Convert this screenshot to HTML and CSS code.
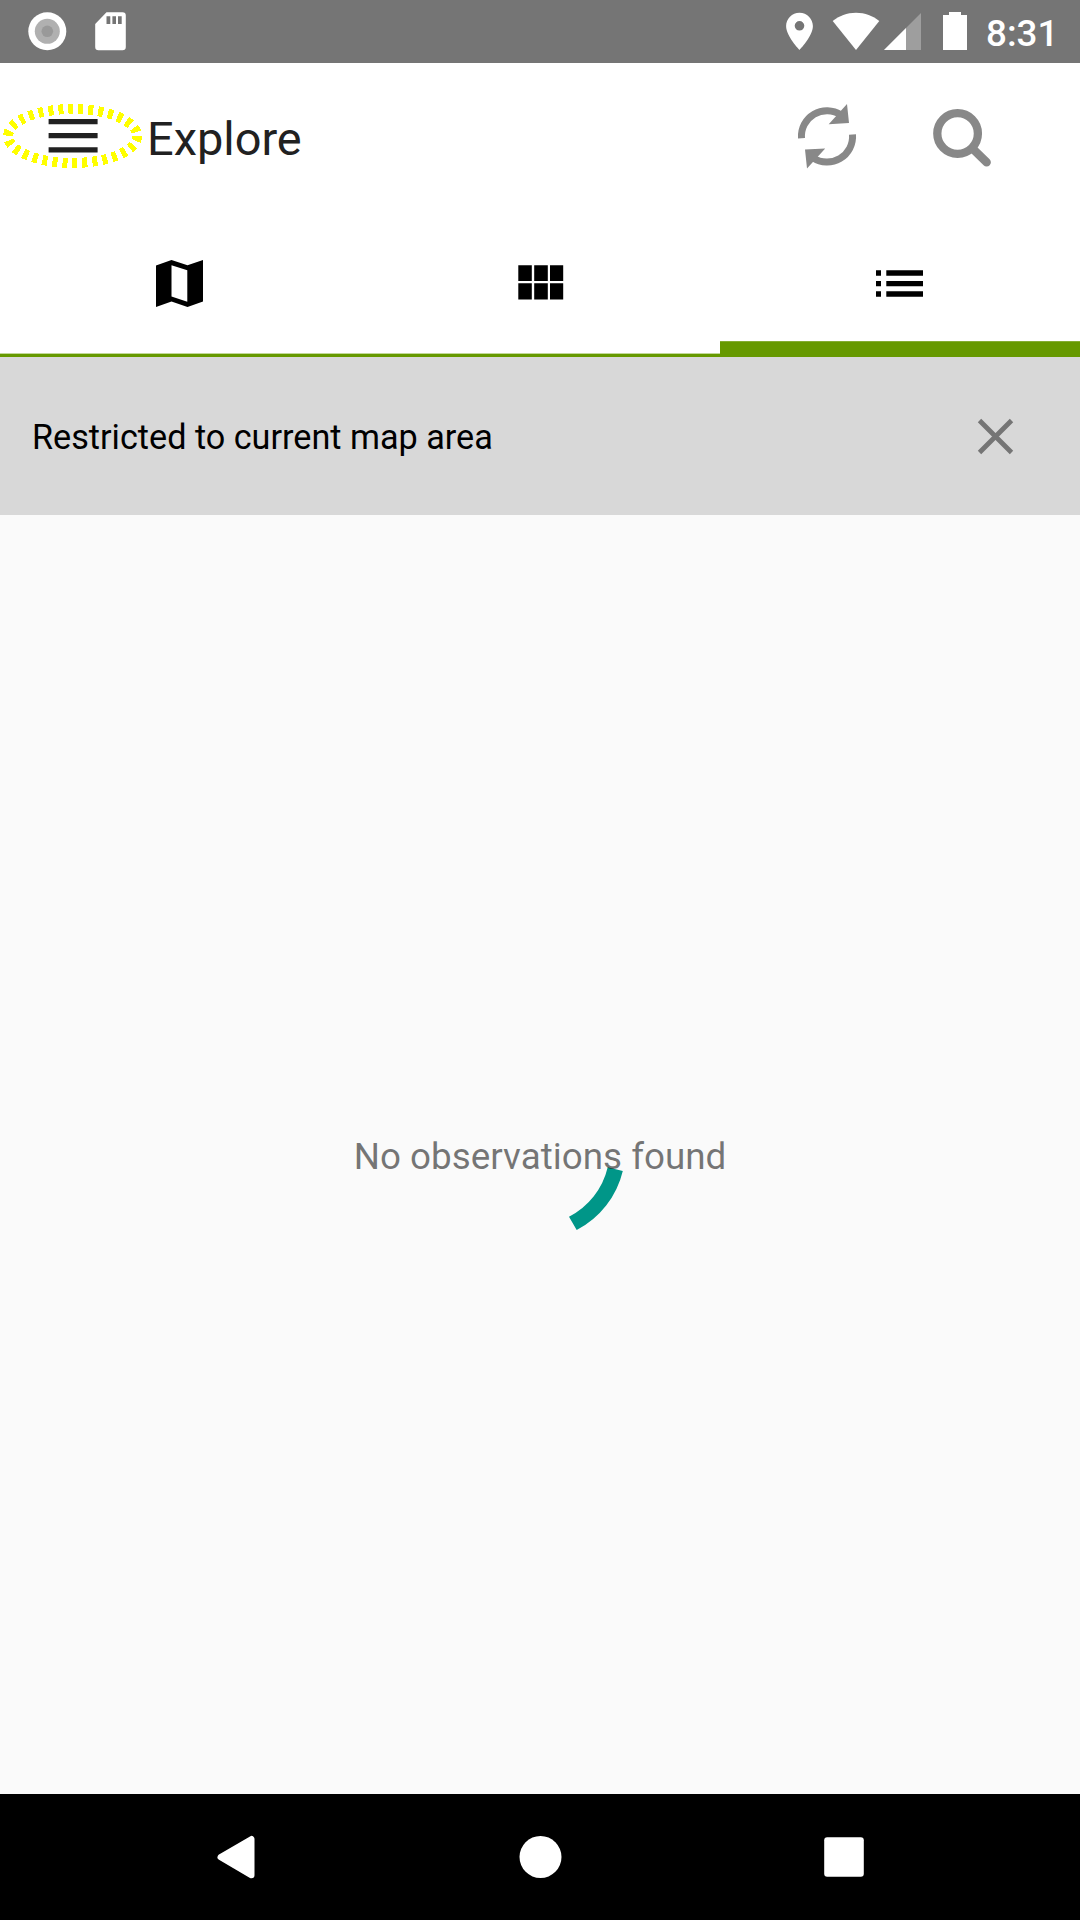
FILE: index.html
```html
<!DOCTYPE html>
<html lang="en">
<head>
<meta charset="utf-8">
<title>Explore</title>
<link rel="stylesheet" href="styles.css">
</head>
<body>
<div class="screen">
  <header class="status">
    <div class="status-left">
      <svg width="40" height="40" viewBox="0 0 40 40"><circle cx="19.3" cy="20.3" r="19" fill="#fff"/><circle cx="19.3" cy="20.3" r="12.5" fill="#b0b0b0"/><circle cx="19.3" cy="20.3" r="5.8" fill="#999"/></svg>
      <svg width="32" height="40" viewBox="0 0 32 40"><path fill="#fff" fill-rule="evenodd" d="M11.5 1.3H27.500a3.300 3.300 0 0 1 3.300 3.300V36a3.300 3.300 0 0 1-3.300 3.300H3.500A3.300 3.300 0 0 1 .2 36V13ZM11.500 5.300V13H15.300V5.300ZM17.400 5.300V13H21V5.300ZM23 5.300V13H26.700V5.300Z"/></svg>
    </div>
    <div class="status-right">
      <svg class="pin" width="28" height="40" viewBox="0 0 28 40"><path fill="#fff" fill-rule="evenodd" d="M13.500 1.700C6 1.700.1 7.700.1 15.100.1 25.200 13.500 39 13.500 39S26.900 25.200 26.900 15.100C26.900 7.700 21 1.700 13.500 1.700ZM13.500 10a4.800 4.800 0 1 1 0 9.600 4.800 4.800 0 0 1 0-9.600Z"/></svg>
      <svg class="wifi" width="48" height="40" viewBox="0 0 48 40"><path fill="#fff" d="M24 39 .7 10C7 5 15 1.800 24 1.800S41 5 47.300 10Z"/></svg>
      <svg class="signal" width="38" height="40" viewBox="0 0 38 40"><path fill="#9e9e9e" d="M0 39 37 2V39Z"/><path fill="#fff" d="M0 39 22 17V39Z"/></svg>
      <svg class="battery" width="24" height="40" viewBox="0 0 24 40"><path fill="#fff" d="M6 1H18V4H24V39H0V4H6Z"/></svg>
      <span class="clock">8:31</span>
    </div>
  </header>

  <div class="appbar">
    <button class="menu" aria-label="Menu">
      <svg width="146" height="73" viewBox="0 100 146 73">
        <ellipse cx="72.600" cy="136" rx="64.500" ry="27" fill="none" stroke="#ff0" stroke-width="10" stroke-dasharray="5 5" shape-rendering="crispEdges"/>
        <path fill="#212121" d="M48.600 119H97.600V124.200H48.600ZM48.600 133.100H97.600V138.300H48.600ZM48.600 147.300H97.600V152.500H48.600Z"/>
      </svg>
    </button>
    <h1 class="title">Explore</h1>
    <div class="actions">
      <svg width="60" height="67" viewBox="797 102.500 60 67">
        <g fill="none" stroke="#888" stroke-width="7"><path d="M801.500 137.700A25.500 25.500 0 0 1 841 114.500"/><path d="M852.500 134A25.500 25.500 0 0 1 813 157.300"/></g>
        <path fill="#888" d="M847 103.600 849 122.600 828.700 123.700ZM807 168 805 149 825.200 148Z"/>
      </svg>
      <svg width="60" height="67" viewBox="932 102.500 60 67">
        <circle cx="957.600" cy="133" r="20.300" fill="none" stroke="#888" stroke-width="8.300"/>
        <path d="M973 148.500 986.600 161.800" stroke="#888" stroke-width="8.600" stroke-linecap="round"/>
      </svg>
    </div>
  </div>

  <nav class="tabs">
    <div class="tab"><svg width="48" height="48" viewBox="156 260 48 48"><path fill-rule="evenodd" d="M156 265.500 171.500 260 187.500 265.300 203 260V301.500L187.500 307 171.500 301.500 156 307ZM171.500 265.300V296.500L187.300 301.800V270.200Z"/></svg></div>
    <div class="tab"><svg width="48" height="48" viewBox="516 260 48 48"><path d="M518.300 265.200H531.800V281H518.300ZM534.200 265.200H547.800V281H534.200ZM550 265.200H563.200V281H550ZM518.300 283.300H531.800V299.400H518.300ZM534.200 283.300H547.800V299.400H534.200ZM550 283.300H563.200V299.400H550Z"/></svg></div>
    <div class="tab active"><svg width="48" height="48" viewBox="876 260 48 48"><path d="M876 270.300H881V275.700H876ZM886.300 270.300H923V275.700H886.300ZM876 281H881V286.200H876ZM886.300 281H923V286.200H886.300ZM876 291.300H881V296.700H876ZM886.300 291.300H923V296.700H886.300Z"/></svg></div>
  </nav>

  <div class="filter">
    <span>Restricted to current map area</span>
    <svg width="37" height="37" viewBox="-18.500 -18.500 37 37"><path d="M-16-16 16 16M16-16-16 16" stroke="#757575" stroke-width="4.800"/></svg>
  </div>

  <main class="content">
    <svg class="spinner" width="170" height="171" viewBox="-85 -85.500 170 171"><path d="M82.800 16.500A90 90 0 0 1 36.700 75.500L29 62.200A74.600 74.600 0 0 0 67.700 12.800Z" fill="#009688"/></svg>
    <p class="empty">No observations found</p>
  </main>

  <footer class="navbar">
    <svg width="44" height="44" viewBox="215 1835 44 44"><path d="M220.500 1857.200 251.500 1839V1875.300Z" fill="#fff" stroke="#fff" stroke-width="6" stroke-linejoin="round"/></svg>
    <svg width="44" height="44" viewBox="518.500 1835 44 44"><circle cx="540" cy="1857" r="21" fill="#fff"/></svg>
    <svg width="44" height="44" viewBox="822 1835 44 44"><rect x="824.200" y="1837.200" width="39.600" height="39.600" rx="3" fill="#fff"/></svg>
  </footer>
</div>
</body>
</html>
```
FILE: styles.css
```css
* { box-sizing: border-box; }

body {
  margin: 0;
  font-family: Roboto, "Liberation Sans", sans-serif;
}

svg { display: block; flex: none; }

.screen {
  display: flex;
  flex-direction: column;
  width: 1080px;
  height: 1920px;
  background: #fafafa;
}

.status {
  display: flex;
  justify-content: space-between;
  height: 63px;
  padding: 11px 25px 0 28px;
  background: #757575;
}

.status-left { display: flex; gap: 27px; }
.status-right { display: flex; }
.wifi { margin-left: 18px; }
.signal { margin-left: 4px; }
.battery { margin-left: 21px; }

.clock {
  width: 69px;
  margin-left: 19px;
  color: #fff;
  font-size: 36.750px;
  font-weight: 500;
  line-height: 46px;
  white-space: nowrap;
}

.appbar {
  display: flex;
  align-items: center;
  height: 147px;
  background: #fff;
}

.menu {
  padding: 0;
  border: 0;
  background: none;
}

.title {
  margin: 3px 0 0 1px;
  color: #212121;
  font-size: 46.900px;
  font-weight: 400;
}

.actions {
  display: flex;
  gap: 75px;
  margin: 0 88px 0 auto;
}

.tabs {
  display: flex;
  height: 147px;
  background: #fff;
}

.tab {
  display: flex;
  flex: 1;
  justify-content: center;
  padding-top: 50px;
  border-bottom: 3px solid #690;
  box-shadow: inset 0 -1px #c2d999;
}

.tab.active {
  border-bottom-width: 15px;
  box-shadow: inset 0 -1px #84ad33;
}

.filter {
  display: flex;
  align-items: center;
  justify-content: space-between;
  height: 158px;
  padding: 0 66px 0 32px;
  background: #d8d8d8;
  color: #000;
  font-size: 34.200px;
}

.filter span { padding-top: 2px; }

.content {
  display: grid;
  flex: 1;
  place-items: center;
}

.spinner, .empty { grid-area: 1 / 1; }

.empty {
  margin: 0;
  padding-top: 4px;
  color: rgba(0, 0, 0, .54);
  font-size: 36.850px;
}

.navbar {
  display: flex;
  justify-content: space-between;
  align-items: center;
  height: 126px;
  padding: 0 214px 0 215px;
  background: #000;
}
```
